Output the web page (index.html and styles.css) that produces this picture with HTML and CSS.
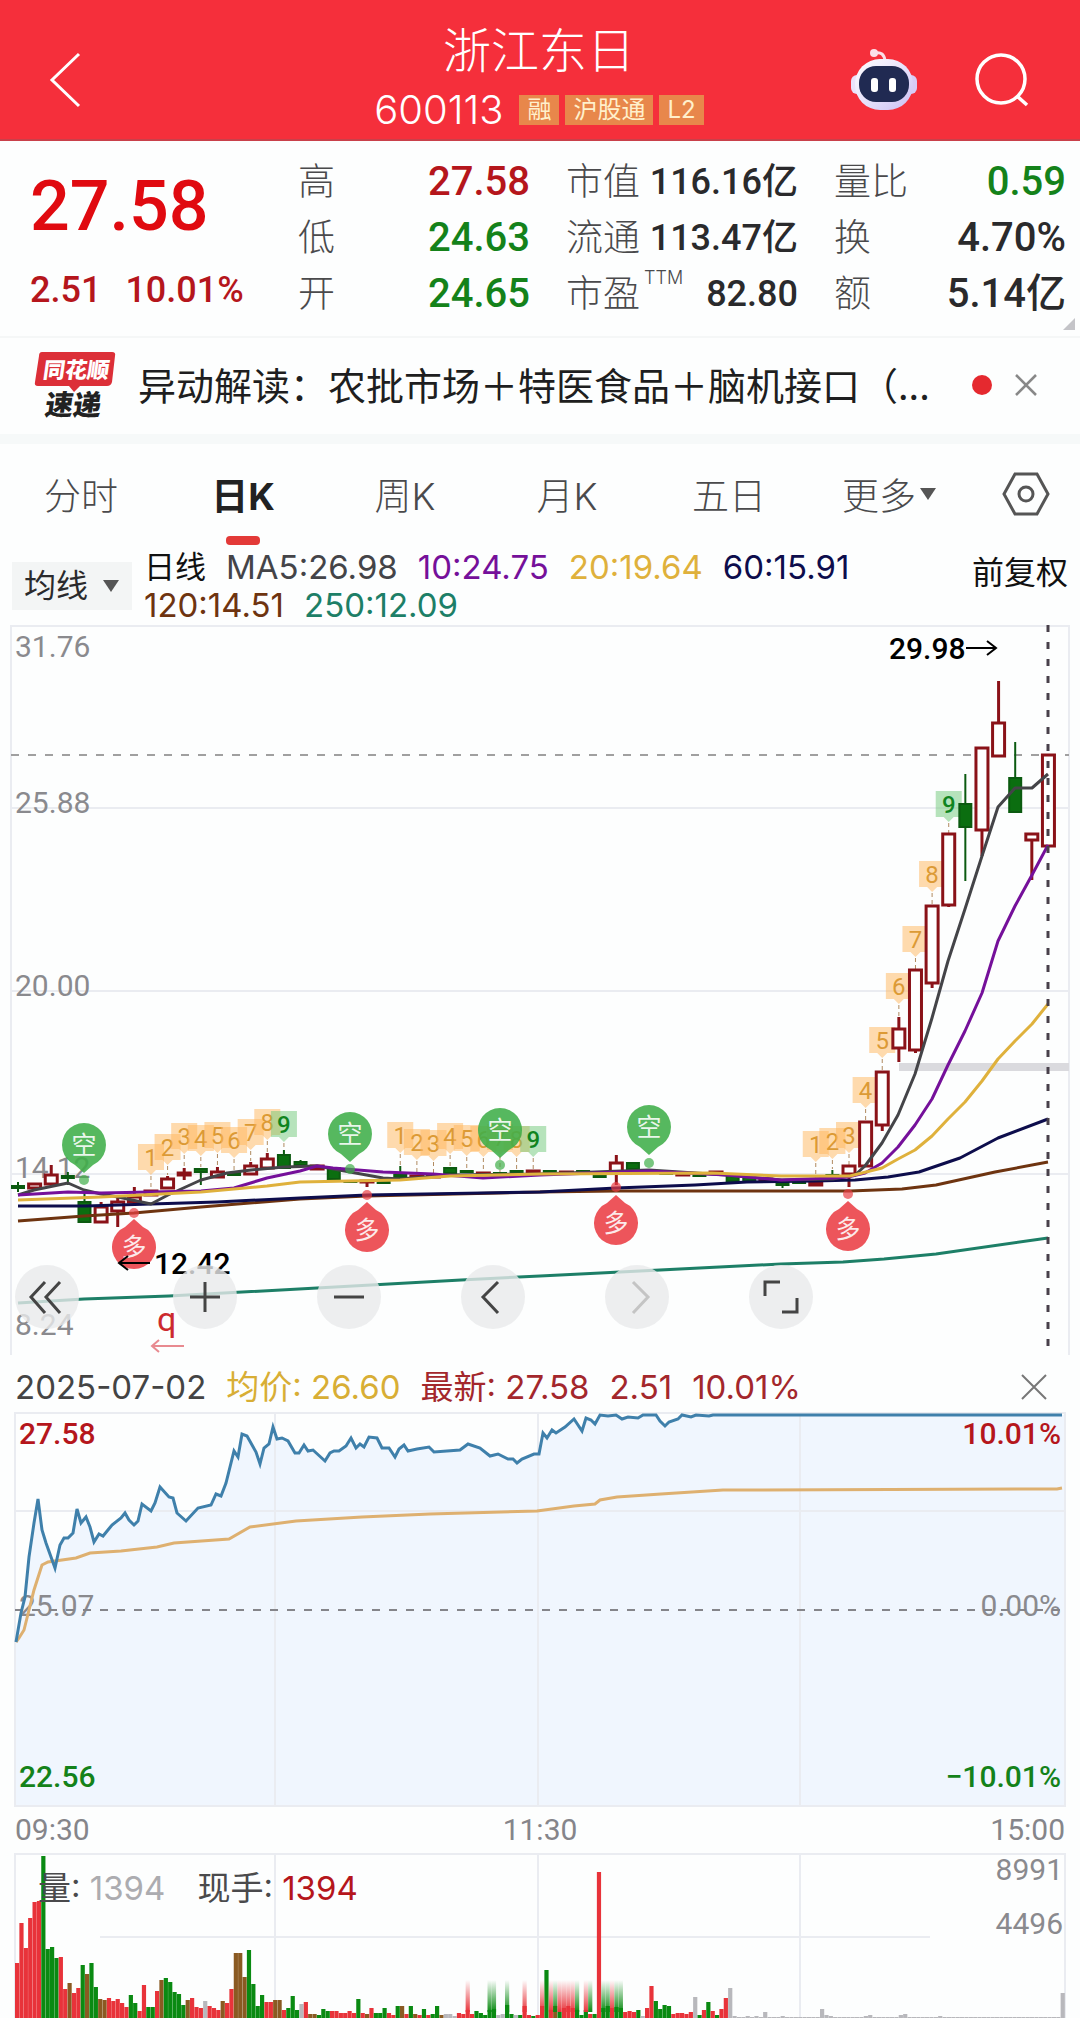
FILE: index.html
```html
<!DOCTYPE html>
<html lang="zh-CN">
<head>
    <meta charset="UTF-8">
    <meta name="viewport" content="width=device-width, initial-scale=1.0">
    <title>浙江东日 600113</title>
    <link rel="stylesheet" href="styles.css">
</head>
<body>
    <!-- Top bar -->
    <header class="topbar">
        <button class="icon-button back-button" aria-label="返回">
            <svg width="34" height="56" viewBox="0 0 34 56"><path d="M31 2 4 28l27 26" fill="none" stroke="#fff" stroke-width="3"/></svg>
        </button>
        <div class="title-block">
            <h1 class="stock-name">浙江东日</h1>
            <div class="stock-code">
                <span>600113</span>
                <span class="tags"><span class="tag">融</span><span class="tag">沪股通</span><span class="tag">L2</span></span>
            </div>
        </div>
        <div class="topbar-actions">
            <button class="icon-button" aria-label="智能助手">
                <svg width="68" height="64" viewBox="0 0 68 64">
                    <defs>
                        <linearGradient id="shell" x1="0" y1="0" x2="1" y2="1">
                            <stop offset="0" stop-color="#fff"/>
                            <stop offset="0.6" stop-color="#e2dcfa"/>
                            <stop offset="1" stop-color="#c9bdf2"/>
                        </linearGradient>
                    </defs>
                    <path d="M25 5q9-2 10 8" fill="none" stroke="#fbdfe8" stroke-width="3"/>
                    <circle cx="24" cy="5" r="4" fill="#fbdfe8"/>
                    <rect x="1" y="27" width="12" height="19" rx="6" fill="#eae2fb"/>
                    <rect x="55" y="27" width="12" height="19" rx="6" fill="#d8ccf6"/>
                    <rect x="5" y="11" width="58" height="51" rx="25" fill="url(#shell)"/>
                    <rect x="9" y="18" width="50" height="36" rx="17" fill="#202a52"/>
                    <rect x="21" y="30" width="7" height="14" rx="3" fill="#fff"/>
                    <rect x="39" y="30" width="7" height="14" rx="3" fill="#fff"/>
                </svg>
            </button>
            <button class="icon-button" aria-label="搜索">
                <svg width="56" height="56" viewBox="0 0 56 56" fill="none" stroke="#fff" stroke-width="3.5"><circle cx="27" cy="27" r="24"/><path d="m43 44 10 9"/></svg>
            </button>
        </div>
    </header>

    <!-- Quote -->
    <section class="quote">
        <div class="price-block">
            <div class="price">27.58</div>
            <div class="change"><span>2.51</span><span>10.01%</span></div>
        </div>
        <dl class="stats">
            <div><dt>高</dt><dd class="up">27.58</dd></div>
            <div><dt>低</dt><dd class="down">24.63</dd></div>
            <div><dt>开</dt><dd class="down">24.65</dd></div>
        </dl>
        <dl class="stats stats-wide">
            <div><dt>市值</dt><dd>116.16亿</dd></div>
            <div><dt>流通</dt><dd>113.47亿</dd></div>
            <div><dt>市盈<sup>TTM</sup></dt><dd>82.80</dd></div>
        </dl>
        <dl class="stats">
            <div><dt>量比</dt><dd class="down">0.59</dd></div>
            <div><dt>换</dt><dd>4.70%</dd></div>
            <div><dt>额</dt><dd>5.14亿</dd></div>
        </dl>
        <span class="corner"></span>
    </section>

    <!-- News -->
    <section class="news">
        <svg class="news-logo" width="84" height="68" viewBox="0 0 84 68">
            <path d="M8 1h70q4 0 3 4l-3 26q-1 4-5 4H46l-6 6-5-6H4q-4 0-3-4L5 5q0-4 3-4z" fill="#dc2f38"/>
            <g transform="skewX(-8)">
                <text x="45" y="27" class="logo-top">同花顺</text>
                <text x="47" y="64" class="logo-bottom">速递</text>
            </g>
        </svg>
        <a class="news-title" href="#">异动解读：农批市场＋特医食品＋脑机接口（...</a>
        <span class="news-dot"></span>
        <button class="icon-button" aria-label="关闭">
            <svg width="24" height="24" viewBox="0 0 24 24"><path d="m2 2 20 20M22 2 2 22" stroke="#888" stroke-width="2.5"/></svg>
        </button>
    </section>

    <!-- Period tabs -->
    <nav class="tabs">
        <button class="tab">分时</button>
        <button class="tab active">日K</button>
        <button class="tab">周K</button>
        <button class="tab">月K</button>
        <button class="tab">五日</button>
        <button class="tab">更多<span class="caret"></span></button>
        <button class="icon-button settings" aria-label="设置">
            <svg width="48" height="44" viewBox="0 0 48 44" fill="none" stroke="#555" stroke-width="3"><path d="M13 2h22l11 20-11 20H13L2 22z"/><circle cx="24" cy="22" r="7"/></svg>
        </button>
    </nav>

    <!-- Moving averages -->
    <section class="legend">
        <div class="ma-select">
            <select aria-label="指标"><option>均线</option></select>
            <span class="caret"></span>
        </div>
        <div class="ma-values">
            <span class="ma-name">日线</span>
            <span class="ma5">MA5:26.98</span>
            <span class="ma10">10:24.75</span>
            <span class="ma20">20:19.64</span>
            <span class="ma60">60:15.91</span>
            <span class="ma120">120:14.51</span>
            <span class="ma250">250:12.09</span>
        </div>
        <button class="adjust">前复权</button>
    </section>

    <!-- Daily K chart -->
    <section class="kline">
        <svg class="chart" viewBox="0 0 1080 730">
            <path class="grid" d="M11 730V1h1058v729M11 183h1058M11 366h1058M11 549h1058"/>
            <g class="axis">
                <text x="15" y="32">31.76</text>
                <text x="15" y="188">25.88</text>
                <text x="15" y="371">20.00</text>
                <text x="15" y="553">14.12</text>
                <text x="15" y="710">8.24</text>
            </g>
            <rect x="899" y="438" width="170" height="8" fill="#dadade"/>
            <path class="price-line" d="M11 130h1058"/>
            <g id="badges"></g>
            <g id="candles"></g>
            <g class="ma-lines">
                <polyline class="ma120" points="18,596 84,591 134,588 201,582 300,574 367,571 540,567 616,566 850,566 902,564 936,560 995,547 1048,537"/>
                <polyline class="ma60" points="18,581 86,581 151,579 217,577 300,573 367,570 540,567 616,563 695,560 747,557 815,556 855,555 888,552 919,547 960,533 998,513 1048,494"/>
                <polyline class="ma250" points="18,678 84,674 169,671 317,663 461,655 540,651 781,639 843,637 884,634 936,629 1048,613"/>
                <polyline class="ma5" points="18,570 34,565 68,558 84,565 101,569 118,572 151,579 168,570 201,555 227,548 251,545 284,542 317,541 350,547 383,553 400,554 450,550 540,549 649,545 726,550 782,555 833,554 855,550 865,541 882,518 898,490 915,449 932,393 948,336 965,284 982,231 998,182 1015,163 1032,163 1048,149"/>
                <polyline class="ma10" points="18,570 68,567 101,568 201,566 234,563 267,553 300,546 317,541 333,543 383,547 433,549 483,553 540,550 649,546 726,550 781,555 833,553 848,552 865,548 882,538 898,522 915,500 932,474 948,440 965,406 982,368 998,316 1015,281 1032,250 1048,220"/>
                <polyline class="ma20" points="18,575 101,572 201,567 267,561 300,557 350,556 400,555 450,551 540,549 712,548 781,551 850,551 882,543 898,534 915,525 932,511 948,494 965,477 982,456 998,434 1015,416 1032,399 1048,379"/>
            </g>
            <g id="pins"></g>
            <path class="cursor" d="M1048 0v722"/>
            <g class="extreme">
                <text x="889" y="34">29.98</text>
                <path d="M966 23h30m-9-7 9 7-9 7"/>
                <text x="154" y="649">12.42</text>
                <path d="M150 638h-31m9-7-9 7 9 7"/>
            </g>
            <text class="q-mark" x="157" y="706">q</text>
            <path d="M184 721h-32m7-6-7 6 7 6" fill="none" stroke="#e88a90" stroke-width="2"/>
        </svg>
        <div class="chart-tools">
            <button class="tool tool-first" aria-label="最左"><svg viewBox="0 0 64 64"><path d="M30 17 16 32l14 16M45 17 31 32l14 16"/></svg></button>
            <button class="tool" aria-label="放大"><svg viewBox="0 0 64 64"><path d="M17 32h30M32 17v30"/></svg></button>
            <button class="tool" aria-label="缩小"><svg viewBox="0 0 64 64"><path d="M17 32h30"/></svg></button>
            <button class="tool" aria-label="向左"><svg viewBox="0 0 64 64"><path d="M37 17 22 32l15 16"/></svg></button>
            <button class="tool" aria-label="向右" disabled><svg viewBox="0 0 64 64"><path d="m28 17 15 15-15 16"/></svg></button>
            <button class="tool" aria-label="全屏"><svg viewBox="0 0 64 64"><path d="M16 31V17h15M48 33v14H33"/></svg></button>
        </div>
    </section>

    <!-- Intraday -->
    <section class="minute-head">
        <span class="date">2025-07-02</span>
        <span class="avg">均价: 26.60</span>
        <span class="last">最新: 27.58</span>
        <span class="last">2.51</span>
        <span class="last">10.01%</span>
        <button class="icon-button minute-close" aria-label="关闭">
            <svg width="28" height="28" viewBox="0 0 28 28"><path d="m2 2 24 24M26 2 2 26" stroke="#777" stroke-width="2"/></svg>
        </button>
    </section>
    <svg class="chart" viewBox="0 0 1080 397">
        <path id="minuteArea" fill="#f0f6fe"/>
        <path class="grid" d="M15 3h1050v393H15zM275 3v393M538 3v393M800 3v393M15 101h1050"/>
        <g class="axis">
            <text x="19" y="206">25.07</text>
            <text x="1061" y="206" text-anchor="end">0.00%</text>
        </g>
        <path class="mid-line" d="M15 200h1050"/>
        <polyline class="avg-line" points="16,232 19,228 24,220 29,200 34,180 42,155 48,152 76,148 90,143 121,141 157,137 174,133 229,129 250,117 296,111 362,107 430,104 537,101 574,96 595,94 600,90 617,87 661,84 723,80 1057,79 1062,78"/>
        <polyline class="price-path" id="minuteLine"/>
        <g class="axis-strong">
            <text class="up" x="19" y="34">27.58</text>
            <text class="up" x="1061" y="34" text-anchor="end">10.01%</text>
            <text class="down" x="19" y="377">22.56</text>
            <text class="down" x="1061" y="377" text-anchor="end">−10.01%</text>
        </g>
    </svg>
    <div class="times"><span>09:30</span><span>11:30</span><span>15:00</span></div>

    <!-- Volume -->
    <section class="volume">
        <svg class="chart" viewBox="0 0 1080 165">
            <defs>
                <linearGradient id="fadeR" x1="0" y1="0" x2="0" y2="1"><stop offset="0" stop-color="#e8333a" stop-opacity="0"/><stop offset="1" stop-color="#e8333a"/></linearGradient>
                <linearGradient id="fadeG" x1="0" y1="0" x2="0" y2="1"><stop offset="0" stop-color="#0a8a12" stop-opacity="0"/><stop offset="1" stop-color="#0a8a12"/></linearGradient>
            </defs>
            <path class="grid" d="M15 165V1h1050v164M275 1v164M538 1v164M800 1v164M100 84h830"/>
            <g id="volumeBars"></g>
            <g class="axis">
                <text x="1063" y="27" text-anchor="end">8991</text>
                <text x="1063" y="81" text-anchor="end">4496</text>
            </g>
        </svg>
        <div class="volume-text">
            <span>量: <span class="muted">1394</span></span>
            <span>现手: <span class="up">1394</span></span>
        </div>
    </section>

    <script src="script.js"></script>
</body>
</html>
```

FILE: styles.css
```css
* {
    box-sizing: border-box;
}

body {
    margin: 0;
    background-color: #fdfefe;
    color: #2a2a2c;
    font-family: Inter, "Noto Sans CJK SC", sans-serif;
    overflow-x: hidden;
}

button,
select {
    font-family: inherit;
    color: inherit;
    background: none;
    border: none;
    padding: 0;
    cursor: pointer;
}

svg {
    display: block;
}

h1,
dl,
dd {
    margin: 0;
}

.icon-button {
    display: flex;
    align-items: center;
    justify-content: center;
}

.up {
    color: #b5161c;
    fill: #b5161c;
}

.down {
    color: #14821a;
    fill: #14821a;
}

/* Top bar */
.topbar {
    display: grid;
    grid-template-columns: 1fr auto 1fr;
    align-items: center;
    height: 141px;
    padding: 20px 50px 0 48px;
    background-color: #f52f3b;
    border-bottom: 2px solid #c9404a;
    color: #fff;
}

.back-button {
    justify-self: start;
}

.title-block {
    text-align: center;
}

.stock-name {
    font-size: 48px;
    line-height: 60px;
    font-weight: 300;
}

.stock-code {
    display: flex;
    align-items: center;
    gap: 16px;
    font-size: 40px;
    line-height: 58px;
    font-weight: 300;
}

.tags {
    display: flex;
    gap: 6px;
}

.tag {
    padding: 0 8px;
    background-color: #e8874b;
    color: #fff0cc;
    font-size: 24px;
    line-height: 30px;
    font-weight: 400;
}

.topbar-actions {
    display: flex;
    justify-content: flex-end;
    align-items: center;
    gap: 56px;
}

/* Quote */
.quote {
    position: relative;
    display: grid;
    grid-template-columns: repeat(4, 1fr);
    gap: 36px;
    padding: 13px 14px 14px 30px;
    border-bottom: 2px solid #f5f7f7;
}

.price-block {
    font-family: Roboto, sans-serif;
    font-weight: 500;
    color: #e00a10;
}

.price {
    padding-top: 10px;
    font-size: 70px;
    line-height: 84px;
}

.change {
    display: flex;
    gap: 24px;
    padding-top: 14px;
    color: #b5161c;
    font-size: 36px;
    line-height: 56px;
}

.stats > div {
    display: flex;
    justify-content: space-between;
    height: 56px;
    line-height: 56px;
}

.stats dt {
    position: relative;
    font-size: 37px;
    font-weight: 300;
    color: #4a4a4c;
}

.stats dd {
    font-family: Roboto, "Noto Sans CJK SC", sans-serif;
    font-size: 40px;
    font-weight: 500;
}

.stats-wide dd {
    font-size: 36px;
}

.stats sup {
    position: absolute;
    left: 100%;
    top: 0;
    padding-left: 4px;
    font-size: 18px;
    line-height: 24px;
}

.corner {
    position: absolute;
    right: 5px;
    bottom: 6px;
    border-left: 12px solid transparent;
    border-bottom: 12px solid #c4c4c8;
}

/* News */
.news {
    display: flex;
    align-items: center;
    height: 96px;
    padding: 0 42px 2px 34px;
}

.logo-top {
    font-size: 22px;
    font-weight: 900;
    fill: #fff;
    text-anchor: middle;
}

.logo-bottom {
    font-size: 28px;
    font-weight: 900;
    fill: #222;
    text-anchor: middle;
}

.news-title {
    flex: 1;
    margin-left: 20px;
    padding-bottom: 2px;
    color: #1e1e20;
    font-family: "Noto Sans CJK SC", sans-serif;
    font-size: 38px;
    line-height: 56px;
    white-space: nowrap;
    text-decoration: none;
}

.news-dot {
    width: 20px;
    height: 20px;
    margin-right: 22px;
    border-radius: 50%;
    background-color: #e5292f;
}

/* Tabs */
.tabs {
    display: grid;
    grid-template-columns: repeat(6, 3fr) 2fr;
    height: 114px;
    padding-top: 10px;
    border-top: 10px solid #f6f9f9;
}

.tab {
    position: relative;
    display: flex;
    align-items: center;
    justify-content: center;
    font-size: 37px;
    font-weight: 300;
    color: #4a4a4c;
}

.tab,
.settings {
    height: 80px;
}

.tab.active {
    font-weight: 700;
    color: #222;
}

.tab.active::after {
    content: "";
    position: absolute;
    bottom: -11px;
    width: 34px;
    height: 9px;
    border-radius: 4px;
    background-color: #e33a38;
}

.caret {
    border: 8px solid transparent;
    border-top: 12px solid #555;
    border-bottom: 0;
}

.tab .caret {
    margin: 0 4px;
}

/* Moving averages */
.legend {
    display: flex;
    align-items: flex-start;
    height: 77px;
    padding: 0 12px;
}

.ma-select {
    position: relative;
    flex: none;
    width: 120px;
    margin: 14px 12px 0 0;
    background-color: #f3f5f5;
}

.ma-select select {
    width: 100%;
    height: 48px;
    padding-left: 12px;
    appearance: none;
    font-size: 32px;
    line-height: 48px;
}

.ma-select .caret {
    position: absolute;
    right: 13px;
    top: 18px;
    pointer-events: none;
}

.ma-values {
    flex: 1;
    display: flex;
    flex-wrap: wrap;
    column-gap: 20px;
    font-size: 33px;
    line-height: 38px;
}

.ma-name {
    font-size: 31px;
    color: #111;
}

.adjust {
    flex: none;
    font-size: 32px;
    line-height: 50px;
    color: #111;
}

.ma5 {
    color: #444448;
}

.ma10 {
    color: #75109a;
}

.ma20 {
    color: #dfb13c;
}

.ma60 {
    color: #0d0d4c;
}

.ma120 {
    color: #6e3410;
}

.ma250 {
    color: #1d7f67;
}

/* Charts */
.chart {
    width: 100%;
    height: auto;
    font-family: Roboto, "Noto Sans CJK SC", sans-serif;
    font-size: 30px;
}

.grid {
    fill: none;
    stroke: #eaecf1;
    stroke-width: 2;
}

.axis {
    fill: #8a8a8e;
}

.axis-strong {
    font-weight: 500;
}

.kline {
    position: relative;
}

.price-line {
    stroke: #a0a0a0;
    stroke-width: 2;
    stroke-dasharray: 8 9;
}

.cursor {
    stroke: #48404a;
    stroke-width: 3;
    stroke-dasharray: 7 10;
}

.ma-lines polyline {
    fill: none;
    stroke: currentColor;
    stroke-width: 3;
    stroke-linejoin: round;
}

.candle-up {
    fill: #fff;
    stroke: #8a1218;
    stroke-width: 3;
}

.candle-down {
    fill: #0b6e10;
    stroke: #0b5a10;
    stroke-width: 2;
}

.extreme text {
    font-weight: 500;
    fill: #000;
}

.extreme path {
    fill: none;
    stroke: #000;
    stroke-width: 2;
}

.q-mark {
    font-size: 34px;
    fill: #cc2a2e;
}

.badge {
    fill: #ffb65c;
    fill-opacity: 0.5;
}

.badge-text {
    font-size: 24px;
    fill: #dc9a35;
    text-anchor: middle;
}

.badge-line {
    stroke: #b08a60;
    stroke-dasharray: 4 3;
}

.badge-nine .badge {
    fill: #6fc777;
}

.badge-nine .badge-text {
    fill: #0f8420;
    font-weight: 500;
}

.pin-short {
    fill: #3fae49;
    fill-opacity: 0.88;
}

.pin-long {
    fill: #ea3e44;
    fill-opacity: 0.88;
}

.pin-text {
    font-size: 25px;
    fill: #fff;
    text-anchor: middle;
}

.chart-tools {
    position: absolute;
    left: 15px;
    bottom: 26px;
    display: flex;
    gap: 80px;
}

.tool {
    width: 64px;
    height: 64px;
    border-radius: 50%;
    background-color: rgba(232, 234, 235, 0.8);
}

.tool-first {
    margin-right: 14px;
}

.tool path {
    fill: none;
    stroke: #444;
    stroke-width: 3;
}

.tool:disabled path {
    stroke: #c4c4c4;
}

/* Intraday */
.minute-head {
    display: flex;
    align-items: center;
    gap: 20px;
    height: 55px;
    padding: 8px 32px 0 15px;
    font-size: 33px;
    line-height: 46px;
}

.date {
    color: #444;
}

.avg {
    color: #d8ae35;
}

.last {
    color: #a3272c;
}

.minute-close {
    margin-left: auto;
}

.mid-line {
    stroke: #85858a;
    stroke-width: 2;
    stroke-dasharray: 8 9;
}

.avg-line {
    fill: none;
    stroke: #deb070;
    stroke-width: 3;
}

.price-path {
    fill: none;
    stroke: #3f80ab;
    stroke-width: 3;
}

.times {
    display: flex;
    justify-content: space-between;
    padding: 0 15px;
    font-family: Roboto, sans-serif;
    font-size: 30px;
    line-height: 46px;
    color: #85858a;
}

/* Volume */
.volume {
    position: relative;
}

.volume-text {
    position: absolute;
    left: 38px;
    top: 16px;
    display: flex;
    gap: 32px;
    font-size: 33px;
    line-height: 38px;
    color: #4a4a4c;
}

.muted {
    color: #acacb0;
}
```

FILE: script.js
```js
const NS = 'http://www.w3.org/2000/svg';

function draw(parent, name, attrs, text) {
    const el = document.createElementNS(NS, name);
    for (const key in attrs) {
        el.setAttribute(key, attrs[key]);
    }
    if (text) el.textContent = text;
    parent.appendChild(el);
    return el;
}

// Daily candles: [direction, body top, body bottom, high, low]
const candles = [
    ['d', 561, 563, 557, 567], ['u', 559, 563], ['u', 550, 559, 540, 562], ['d', 551, 553, 547, 560],
    ['d', 577, 597, 567, 597], ['u', 582, 597, 577, 597], ['u', 577, 586, 573, 602], ['u', 572, 577, 562, 580],
    ['u', 566, 570], ['u', 554, 563, 551, 563], ['u', 548, 550, 543, 555], ['d', 544, 547, 543, 560],
    ['u', 547, 552, 542, 552], ['d', 548, 550], ['u', 541, 549, 537, 549], ['u', 534, 543, 528, 543],
    ['d', 530, 543, 525, 543], ['d', 537, 540, 535, 542], ['u', 541, 544], ['d', 543, 554],
    ['d', 556, 557], ['u', 556, 557, 556, 562], ['d', 557, 558], ['d', 550, 552, 541, 552],
    ['u', 551, 552], ['u', 551, 552], ['d', 543, 548], ['d', 546, 547],
    ['u', 548, 549], ['d', 548, 549], ['d', 546, 547], ['u', 546, 547],
    ['d', 546, 547], ['u', 547, 548], ['d', 546, 547], ['d', 551, 552],
    ['u', 538, 547, 530, 560], ['d', 538, 544], ['u', 546, 547], ['d', 548, 549],
    ['u', 549, 550], ['d', 550, 551], ['u', 547, 548], ['d', 551, 556],
    ['d', 552, 556], ['u', 554, 555], ['d', 558, 560, 556, 563], ['d', 556, 558],
    ['u', 558, 560], ['d', 550, 552, 545, 552], ['u', 541, 549, 541, 562], ['u', 497, 541],
    ['u', 447, 500, 447, 506], ['u', 404, 423, 392, 437], ['u', 345, 425, 345, 428], ['u', 281, 358, 281, 363],
    ['u', 209, 280, 209, 282], ['d', 179, 202, 149, 256], ['u', 123, 205, 123, 231], ['u', 98, 131, 56, 131],
    ['d', 153, 187, 117, 187], ['u', 209, 215, 209, 255], ['u', 130, 221]
];
const candleX = i => 18 + i * 16.62;

const candleGroup = document.getElementById('candles');
candles.forEach(([dir, top, bottom, high = top, low = bottom], i) => {
    const x = candleX(i);
    const cls = dir === 'u' ? 'candle-up' : 'candle-down';
    draw(candleGroup, 'path', { class: cls, d: `M${x} ${high}V${low}` });
    draw(candleGroup, 'rect', { class: cls, x: x - 6, y: top, width: 12, height: bottom - top });
});

// Nine-turn counters: [candle index, label, y]
const badges = [
    [8, 1, 533], [9, 2, 523], [10, 3, 512], [11, 4, 514], [12, 5, 511], [13, 6, 516], [14, 7, 508], [15, 8, 498], [16, 9, 500],
    [23, 1, 511], [24, 2, 518], [25, 3, 519], [26, 4, 512], [27, 5, 514], [28, 6, 515], [29, 7, 513], [30, 8, 515], [31, 9, 515],
    [48, 1, 520], [49, 2, 517], [50, 3, 511], [51, 4, 466], [52, 5, 416], [53, 6, 362], [54, 7, 315], [55, 8, 250], [56, 9, 180]
];
const badgeGroup = document.getElementById('badges');
badges.forEach(([i, label, y]) => {
    const x = candleX(i);
    const g = draw(badgeGroup, 'g', { class: label === 9 ? 'badge-nine' : 'badge-count' });
    draw(g, 'path', { class: 'badge', d: `M${x - 13} ${y - 14}h26v26h-8l-5 5l-5 -5h-8z` });
    draw(g, 'path', { class: 'badge-line', d: `M${x} ${y + 18}V${(candles[i][3] || candles[i][1]) - 1}` });
    draw(g, 'text', { class: 'badge-text', x: x, y: y + 8 }, String(label));
});

// Signals: [text, x, y, dot y]
const pins = [
    ['空', 84, 520, 555], ['空', 350, 509, 544], ['空', 500, 505, 540], ['空', 649, 502, 538],
    ['多', 134, 622, 588], ['多', 367, 605, 570], ['多', 616, 598, 562], ['多', 848, 604, 569]
];
const pinGroup = document.getElementById('pins');
pins.forEach(([text, x, y, dot]) => {
    const s = text === '空' ? 1 : -1;
    const g = draw(pinGroup, 'g', { class: s === 1 ? 'pin-short' : 'pin-long' });
    const sweep = s === 1 ? 1 : 0;
    draw(g, 'path', { d: `M${x} ${y + 28 * s}L${x - 9} ${y + 20 * s}A22 22 0 1 ${sweep} ${x + 9} ${y + 20 * s}z` });
    draw(g, 'circle', { cx: x, cy: dot, r: 5, 'fill-opacity': 0.7 });
    draw(g, 'text', { class: 'pin-text', x: x, y: y + 9 }, text);
});

// Intraday price
const minutePoints = '16,232 21,203 25,187 29,147 34,113 38,89 42,120 46,133 55,158 60,135 64,128 68,128 73,123 77,99 81,113 86,107 90,117 94,132 99,124 103,126 112,115 121,108 125,103 129,110 134,115 138,111 142,94 151,101 155,93 160,77 169,87 173,88 177,103 186,111 198,98 211,95 216,84 221,86 226,73 234,41 238,47 242,24 247,26 256,42 260,54 264,38 269,34 273,17 277,29 282,28 288,31 295,43 299,43 304,35 308,41 313,40 325,51 330,43 334,41 339,41 346,36 351,28 356,38 360,34 364,37 369,27 377,28 382,38 389,38 395,47 399,39 404,35 408,41 417,39 429,37 434,42 460,40 468,34 480,38 490,46 498,44 508,49 513,49 517,53 522,49 534,44 539,44 543,23 547,28 552,20 556,23 565,17 574,9 582,21 586,8 591,10 595,14 600,5 608,6 616,5 622,9 628,7 638,8 643,5 656,5 660,11 665,16 669,12 678,9 682,5 691,7 696,5 709,6 713,5 1062,5';
document.getElementById('minuteLine').setAttribute('points', minutePoints);
document.getElementById('minuteArea').setAttribute('d', `M15 396L${minutePoints}L1065 5V396z`);

// Volume per minute: height + colour (r up, g down, b mixed, n flat)
const volumes = ('55r 95r 70r 100r 116r 117r 162g 69g 71g 60g 61r 29r 35b 25r 30r 53g 44b 55g 31g 19b 18b 20r 17r 19r 15r 11r 23g 15g 7r 33r ' +
    '11g 11g 27r 38b 40g 36g 26g 24g 13g 18b 20r 11r 10r 17n 12r 10r 8r 17b 15r 29r 65b 65b 41b 68g 34g 12g 23g 16r 16r 18b ' +
    '18b 8r 10g 22g 8g 14n 16r 4b 4b 3g 9g 7g 7r 7r 5r 5r 7r 5r 19g 5r 4b 10r 5g 5g 10g 5r 3r 12g 12b 4r ' +
    '12g 4b 3r 9g 3r 4g 12g 3b 4n 4n 2n 5r 4r 8r 4r 7g 5g 3g 8g 9g 3n 4n 13g 4g 3n 3g 12r 3r 2g 3r ' +
    '12r 48g 8r 12b 6g 10r 12r 10r 8g 3g 8g 4r 4g 146r 10g 12g 10r 11g 10g 6r 7r 6r 8g 2n 10r 32r 17g 9g 13g 12g ' +
    '4r 5r 5r 4r 6r 21n 3g 8r 16g 7r 3g 9r 20r 30n 2n 1n 1n 2n 1n 2n 1n 6n 1n 1n 1n 2n 1n 1n 1n 1n ' +
    '1n 1n 1n 1n 9n 3n 2n 1n 1n 1n 1n 1n 1n 1n 2n 3n 1n 1n 1n 1n 1n 1n 3n 4n 1n 1n 1n 1n 1n 1n ' +
    '1n 2n 1n 1n 1n 1n 1n 1n 1n 1n 1n 1n 1n 1n 1n 1n 1n 1n 1n 1n 1n 1n 1n 1n 1n 1n 1n 1n 1n 25n').split(' ');
const volumeColors = { r: '#e8333a', g: '#0a8a12', b: '#8a5a22', n: '#b8b8bc' };
const volumeGroup = document.getElementById('volumeBars');
volumes.forEach((item, i) => {
    const h = parseInt(item, 10);
    const x = 15 + i * 1050 / volumes.length;
    draw(volumeGroup, 'rect', { x: x, y: 165 - h, width: 4.2, height: h, fill: volumeColors[item.slice(-1)] });
});

// Soft bars around the noon session
[[103, 'R'], [108, 'G'], [109, 'G'], [112, 'G'], [116, 'R'], [120, 'R'], [122, 'R'], [123, 'G'], [124, 'R'], [125, 'R'], [126, 'R'], [127, 'R'],
    [128, 'G'], [130, 'R'], [131, 'G'], [134, 'G'], [135, 'G'], [136, 'R'], [137, 'G'], [138, 'G']].forEach(([i, tone]) => {
    draw(volumeGroup, 'rect', { x: 15 + i * 4.375, y: 127, width: 4.2, height: 32, fill: `url(#fade${tone})` });
});
```
